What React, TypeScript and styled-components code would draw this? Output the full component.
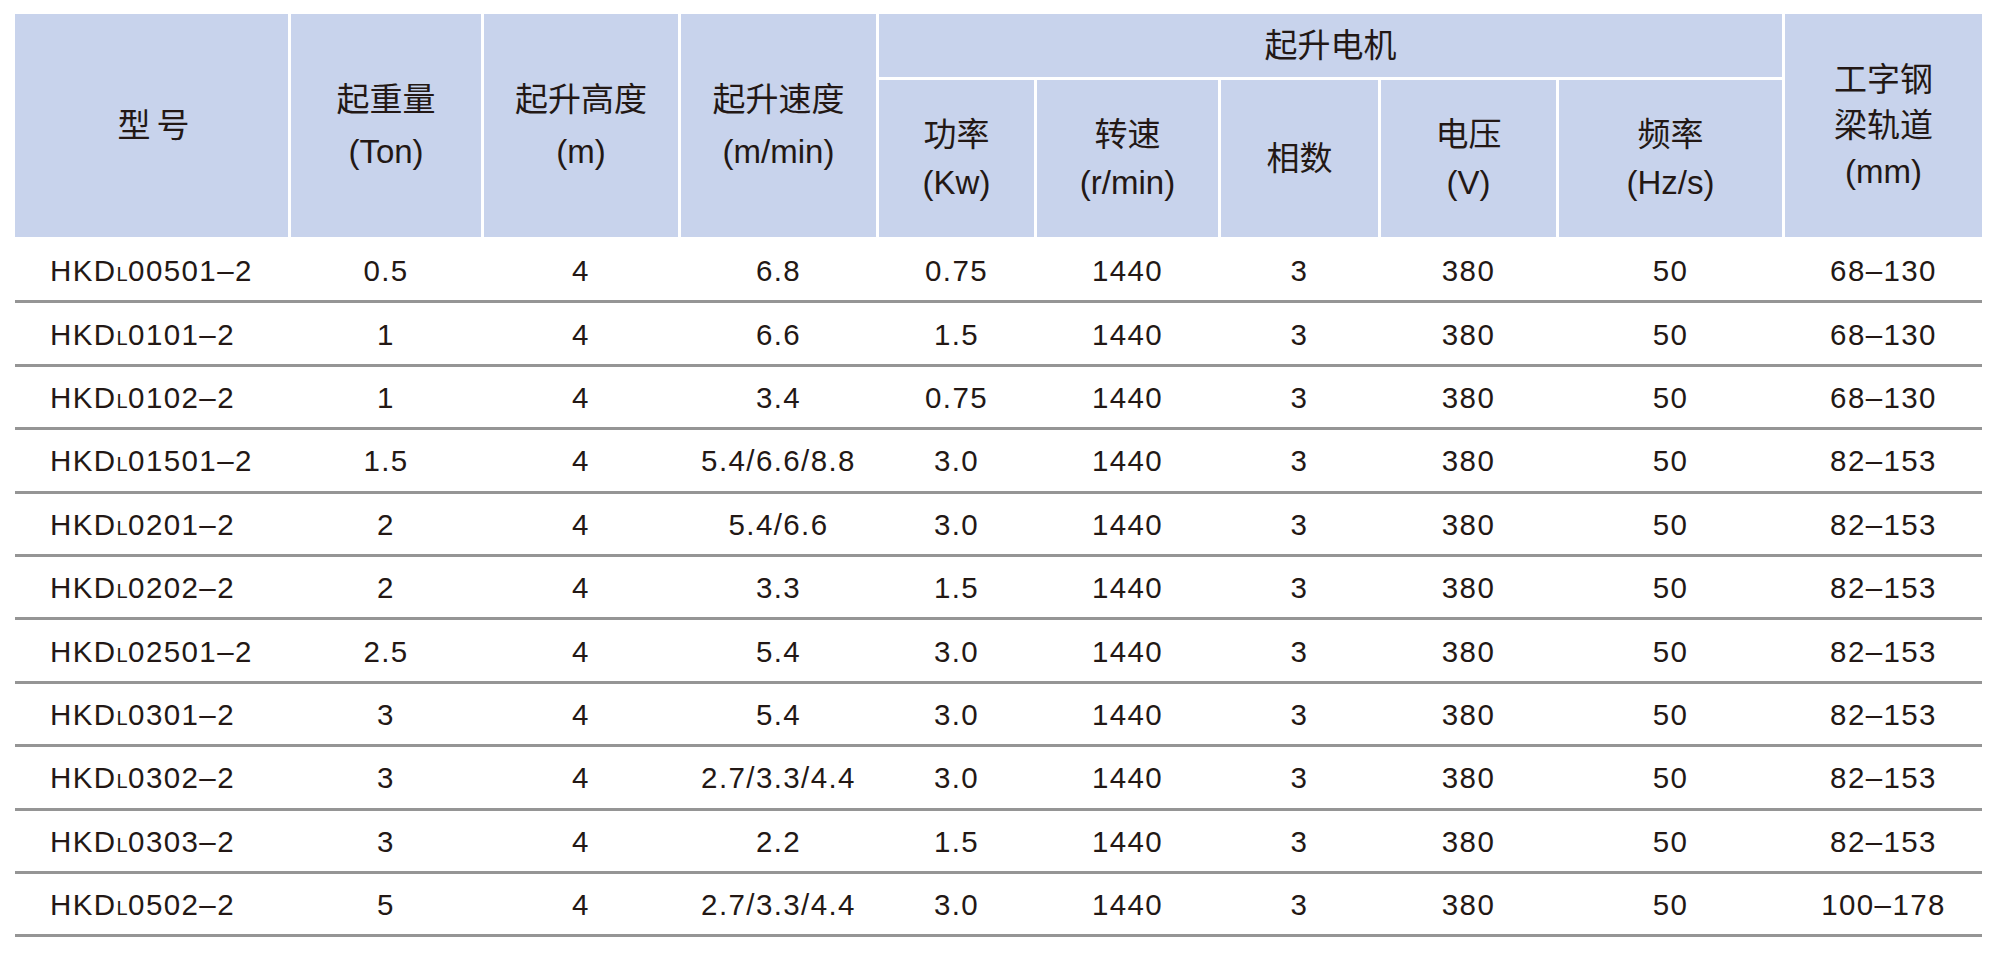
import React from 'react';
import styled, { createGlobalStyle } from 'styled-components';

const GlobalStyle = createGlobalStyle`
  html, body {
    margin: 0;
    padding: 0;
    background: #ffffff;
  }
  body {
    font-family: 'Liberation Sans', 'Noto Sans CJK SC', sans-serif;
    color: #231815;
  }
`;

// column tracks measured from the reference, separated by 3px white gaps
const tracks = '273px 190px 194px 195px 155px 181px 157px 175px 223px 197px';

const Page = styled.div`
  padding: 14px 0 0 15px;
  width: 1967px;
`;

const Head = styled.div`
  display: grid;
  grid-template-columns: ${tracks};
  grid-template-rows: 63px 157px;
  column-gap: 3px;
  row-gap: 3px;
`;

const HeadCell = styled.div<{ $col: string; $row: string; $lh?: number; $spread?: boolean }>`
  grid-column: ${(p) => p.$col};
  grid-row: ${(p) => p.$row};
  background: #c8d3ec;
  display: flex;
  flex-direction: column;
  align-items: center;
  justify-content: center;
  text-align: center;
  font-size: 33px;
  line-height: ${(p) => p.$lh ?? 48}px;
  letter-spacing: ${(p) => (p.$spread ? '6px' : '0')};
  padding-left: ${(p) => (p.$spread ? '10px' : '0')};
  color: #231815;
  white-space: nowrap;
`;

const Body = styled.div`
  margin-top: 3px;
`;

const Row = styled.div`
  display: grid;
  grid-template-columns: ${tracks};
  column-gap: 3px;
  box-sizing: border-box;
  height: 63.4px;
  border-bottom: 3px solid #959595;
  align-items: center;
`;

const Cell = styled.div<{ $left?: boolean }>`
  font-size: 29.5px;
  letter-spacing: 1.4px;
  text-align: ${(p) => (p.$left ? 'left' : 'center')};
  padding-left: ${(p) => (p.$left ? '35px' : '0')};
  padding-top: 2px;
  white-space: nowrap;
`;

const Sub = styled.span`
  font-size: 20px;
  letter-spacing: 0.5px;
`;

type Spec = {
  model: string;
  load: string;
  height: string;
  speed: string;
  power: string;
  rail: string;
};

const rows: Spec[] = [
  { model: '00501', load: '0.5', height: '4', speed: '6.8', power: '0.75', rail: '68–130' },
  { model: '0101', load: '1', height: '4', speed: '6.6', power: '1.5', rail: '68–130' },
  { model: '0102', load: '1', height: '4', speed: '3.4', power: '0.75', rail: '68–130' },
  { model: '01501', load: '1.5', height: '4', speed: '5.4/6.6/8.8', power: '3.0', rail: '82–153' },
  { model: '0201', load: '2', height: '4', speed: '5.4/6.6', power: '3.0', rail: '82–153' },
  { model: '0202', load: '2', height: '4', speed: '3.3', power: '1.5', rail: '82–153' },
  { model: '02501', load: '2.5', height: '4', speed: '5.4', power: '3.0', rail: '82–153' },
  { model: '0301', load: '3', height: '4', speed: '5.4', power: '3.0', rail: '82–153' },
  { model: '0302', load: '3', height: '4', speed: '2.7/3.3/4.4', power: '3.0', rail: '82–153' },
  { model: '0303', load: '3', height: '4', speed: '2.2', power: '1.5', rail: '82–153' },
  { model: '0502', load: '5', height: '4', speed: '2.7/3.3/4.4', power: '3.0', rail: '100–178' },
];

const App = () => {
  return (
    <>
      <GlobalStyle />
      <Page>
        <Head>
          <HeadCell $col="1" $row="1 / 3" $spread>
            型号
          </HeadCell>
          <HeadCell $col="2" $row="1 / 3" $lh={52}>
            <span>起重量</span>
            <span>(Ton)</span>
          </HeadCell>
          <HeadCell $col="3" $row="1 / 3" $lh={52}>
            <span>起升高度</span>
            <span>(m)</span>
          </HeadCell>
          <HeadCell $col="4" $row="1 / 3" $lh={52}>
            <span>起升速度</span>
            <span>(m/min)</span>
          </HeadCell>
          <HeadCell $col="5 / 10" $row="1">起升电机</HeadCell>
          <HeadCell $col="5" $row="2">
            <span>功率</span>
            <span>(Kw)</span>
          </HeadCell>
          <HeadCell $col="6" $row="2">
            <span>转速</span>
            <span>(r/min)</span>
          </HeadCell>
          <HeadCell $col="7" $row="2">相数</HeadCell>
          <HeadCell $col="8" $row="2">
            <span>电压</span>
            <span>(V)</span>
          </HeadCell>
          <HeadCell $col="9" $row="2">
            <span>频率</span>
            <span>(Hz/s)</span>
          </HeadCell>
          <HeadCell $col="10" $row="1 / 3" $lh={46}>
            <span>工字钢</span>
            <span>梁轨道</span>
            <span>(mm)</span>
          </HeadCell>
        </Head>
        <Body>
          {rows.map((r) => (
            <Row key={r.model}>
              <Cell $left>
                HKD<Sub>L</Sub>
                {r.model}–2
              </Cell>
              <Cell>{r.load}</Cell>
              <Cell>{r.height}</Cell>
              <Cell>{r.speed}</Cell>
              <Cell>{r.power}</Cell>
              <Cell>1440</Cell>
              <Cell>3</Cell>
              <Cell>380</Cell>
              <Cell>50</Cell>
              <Cell>{r.rail}</Cell>
            </Row>
          ))}
        </Body>
      </Page>
    </>
  );
};

export default App;
